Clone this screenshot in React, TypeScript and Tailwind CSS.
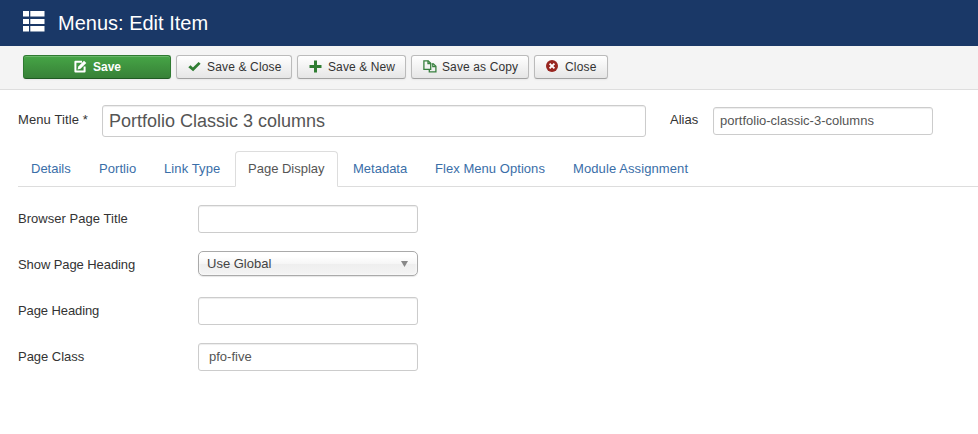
import type { ReactNode } from "react";

const tabs = [
  { label: "Details", box: "w-[66px]", text: "" },
  { label: "Portlio", box: "w-[63px]", text: "tracking-[0.05px]" },
  { label: "Link Type", box: "w-[82px]", text: "tracking-[0.1px]" },
  { label: "Page Display", box: "w-[103px]", text: "", active: true },
  { label: "Metadata", box: "w-[80px]", text: "" },
  { label: "Flex Menu Options", box: "w-[136px]", text: "tracking-[0.05px]" },
  { label: "Module Assignment", box: "w-[141px]", text: "tracking-[0.1px]" },
];

const inputClass =
  "block h-[28px] w-[220px] rounded-[3px] border border-[#ccc] bg-white pb-[2px] text-[13px] leading-[18px] text-[#555] shadow-[inset_0_1px_1px_rgba(0,0,0,0.075)] outline-none";

function ListIcon() {
  return (
    <svg width="22" height="21" viewBox="0 0 22 21" fill="#fff">
      <path d="M0 0h6v5.500H0zM7.300 0H21.500v5.500H7.300zM0 8h6v5H0zM7.300 8H21.500v5H7.300zM0 15h6v5.500H0zM7.300 15H21.500v5.500H7.300z" />
    </svg>
  );
}

function EditIcon() {
  return (
    <svg width="13" height="13" viewBox="0 0 13 13">
      <path d="M8 1.8H1.4v9.6h9.2V6.5" fill="none" stroke="#fff" strokeWidth="2" strokeLinejoin="round" />
      <path d="M3.6 9.4l.7-3L10 .7l2.3 2.2-5.8 5.8z" fill="#fff" />
    </svg>
  );
}

function CheckIcon() {
  return (
    <svg width="13" height="12" viewBox="0 0 13 12" className="-mt-px">
      <path d="M.3 6.2l2.2-2 2.4 2.2L10.6.9l2 1.8-7.5 7.6z" fill="#2f7d32" />
    </svg>
  );
}

function PlusIcon() {
  return (
    <svg width="13" height="13" viewBox="0 0 13 13" className="-mt-[2px]">
      <path d="M5 .5h3V5h4.5v3H8v4.500H5V8H.5V5H5z" fill="#2f7d32" />
    </svg>
  );
}

function CopyIcon() {
  return (
    <svg width="14" height="13" viewBox="0 0 14 13" fill="none" stroke="#38803f" strokeWidth="1.3" className="-mt-[2px]">
      <path d="M6 9.300H.9V.8h4.300L7.700 3.200V9.300z" />
      <path d="M5 .8v2.700h2.700" />
      <path d="M8.700 3.800h1.700l2.500 2.500v5.500H6.300V9.300" />
      <path d="M9.800 3.800v2.900h3" />
    </svg>
  );
}

function CloseIcon() {
  return (
    <svg width="12" height="12" viewBox="0 0 12 12" className="-mt-[2px]">
      <circle cx="6" cy="6" r="6" fill="#982620" />
      <path d="M3.600 3.600l4.800 4.800M8.400 3.600L3.600 8.400" stroke="#fff" strokeWidth="1.900" />
    </svg>
  );
}

function ToolButton({ box, icon, children }: { box: string; icon: ReactNode; children: ReactNode }) {
  return (
    <button
      className={`flex h-[24px] items-center rounded-[3px] border border-[#bbb] border-b-[#a2a2a2] bg-linear-to-b from-white to-[#e6e6e6] text-[12px] leading-[18px] whitespace-nowrap text-[#333] shadow-[0_1px_2px_rgba(0,0,0,0.05)] ${box}`}
    >
      {icon}
      {children}
    </button>
  );
}

function Field({ label, text, children }: { label: string; text: string; children: ReactNode }) {
  return (
    <div className="flex h-[28px] items-start">
      <label className={`w-[180px] pt-[5px] ${text}`}>{label}</label>
      {children}
    </div>
  );
}

export default function App() {
  return (
    <div className="h-[434px] w-[978px] overflow-hidden bg-white font-['Liberation_Sans',Arial,sans-serif] text-[13px] leading-[18px] text-[#333]">
      <header className="flex h-[46px] items-start bg-[#1a3867] pl-[23px] text-white">
        <div className="mt-[11px] w-[35px]">
          <ListIcon />
        </div>
        <h1 className="mt-[8px] text-[20px] leading-[30px]">Menus: Edit Item</h1>
      </header>

      <div className="flex h-[44px] items-start gap-[5px] border-b border-[#dedede] bg-[#f4f4f4] pt-[9px] pl-[23px]">
        <button className="flex h-[24px] w-[148px] items-center rounded-[3px] border border-[#2f7a31] border-b-[#1f5a22] bg-linear-to-b from-[#46a546] to-[#378137] pl-[50px] text-[12px] font-bold text-white shadow-[inset_0_1px_0_rgba(255,255,255,0.2),0_1px_2px_rgba(0,0,0,0.05)]">
          <div className="-mt-[2px]">
            <EditIcon />
          </div>
          <span className="ml-[6px]">Save</span>
        </button>
        <ToolButton box="w-[116px] pl-[11px]" icon={<CheckIcon />}>
          <span className="ml-[6px] tracking-[0.15px]">Save &amp; Close</span>
        </ToolButton>
        <ToolButton box="w-[109px] pl-[11px]" icon={<PlusIcon />}>
          <span className="ml-[6px] tracking-[0.1px]">Save &amp; New</span>
        </ToolButton>
        <ToolButton box="w-[118px] pl-[11px]" icon={<CopyIcon />}>
          <span className="ml-[5px] tracking-[0.12px]">Save as Copy</span>
        </ToolButton>
        <ToolButton box="w-[74px] pl-[11px]" icon={<CloseIcon />}>
          <span className="ml-[7px] tracking-[0.2px]">Close</span>
        </ToolButton>
      </div>

      <main className="pl-[18px]">
        <div className="flex h-[61px] items-start pt-[15px]">
          <label className="w-[84px] pt-[6px] tracking-[0.1px]">Menu Title *</label>
          <input
            className="h-[32px] w-[544px] rounded-[3px] border border-[#ccc] px-[6px] text-[18px] leading-[24px] text-[#555] shadow-[inset_0_1px_1px_rgba(0,0,0,0.075)] outline-none"
            defaultValue="Portfolio Classic 3 columns"
          />
          <label className="ml-[24px] w-[43px] pt-[6px]">Alias</label>
          <div className="pt-[2px]">
            <input className={`${inputClass} px-[6px]`} defaultValue="portfolio-classic-3-columns" />
          </div>
        </div>

        <nav className="flex h-[36px] items-stretch gap-[2px] border-b border-[#ddd]">
          {tabs.map((tab) => (
            <a
              key={tab.label}
              className={`-mb-px block rounded-t-[4px] border pt-[8px] pl-[12px] whitespace-nowrap ${tab.box} ${
                tab.active ? "border-[#ddd] border-b-white bg-white text-[#555]" : "border-transparent text-[#3a6ea8]"
              }`}
            >
              <span className={tab.text}>{tab.label}</span>
            </a>
          ))}
        </nav>

        <form className="flex flex-col gap-[18px] pt-[18px]">
          <Field label="Browser Page Title" text="tracking-[0.04px]">
            <input className={`${inputClass} px-[10px]`} />
          </Field>
          <Field label="Show Page Heading" text="tracking-[-0.08px]">
            <div className="flex h-[25px] w-[220px] items-center justify-between rounded-[5px] border border-[#aaa] bg-[linear-gradient(#fff_20%,#f6f6f6_50%,#eee_52%,#f4f4f4_100%)] pr-[9px] pl-[8px] text-[#444] shadow-[inset_0_0_3px_#fff,0_1px_1px_rgba(0,0,0,0.1)]">
              <span>Use Global</span>
              <svg width="7" height="6" viewBox="0 0 7 6">
                <path d="M0 0h7L3.500 6z" fill="#888" />
              </svg>
            </div>
          </Field>
          <Field label="Page Heading" text="tracking-[-0.1px]">
            <input className={`${inputClass} px-[10px]`} />
          </Field>
          <Field label="Page Class" text="tracking-[-0.02px]">
            <input className={`${inputClass} px-[10px]`} defaultValue="pfo-five" />
          </Field>
        </form>
      </main>
    </div>
  );
}
